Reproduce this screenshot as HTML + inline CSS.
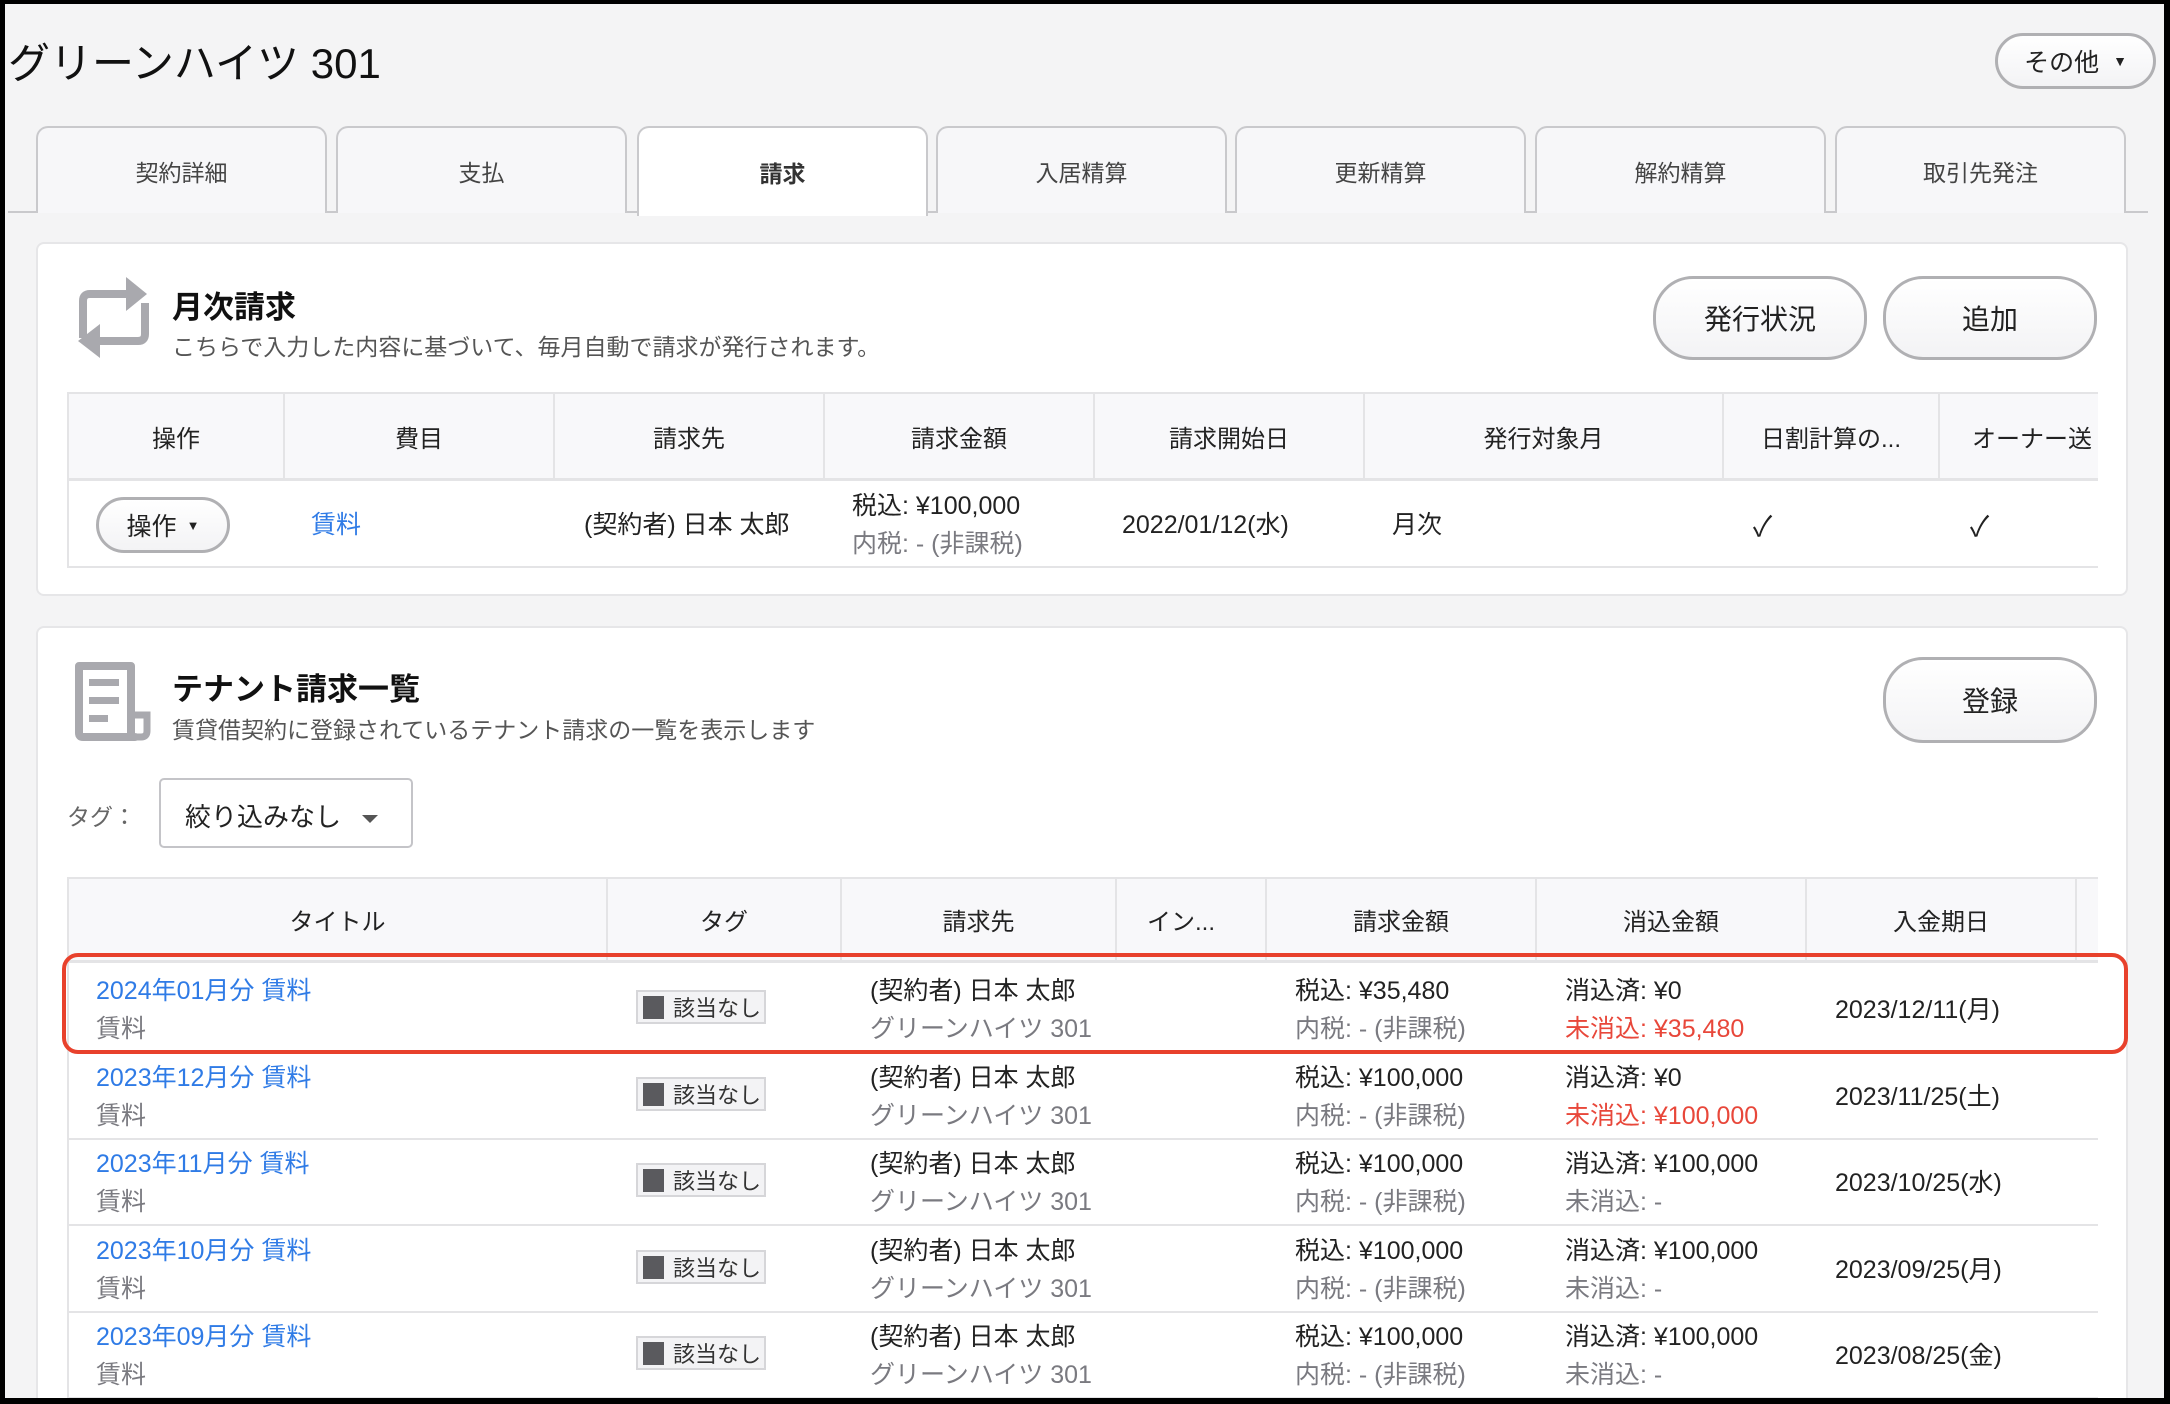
<!DOCTYPE html>
<html><head><meta charset="utf-8">
<style>
*{box-sizing:border-box;margin:0;padding:0}
body{width:2170px;height:1404px;overflow:hidden;background:#000;font-family:"Liberation Sans","Noto Sans CJK JP",sans-serif;color:#222;position:relative}
.page{position:absolute;left:5px;top:4px;width:2159px;height:1394px;background:#f4f4f5;overflow:hidden}
.a{position:absolute}
.pill{position:absolute;border:3px solid #b0b0b3;border-radius:40px;background:linear-gradient(#fff,#f3f3f5);display:flex;align-items:center;justify-content:center;font-size:28px;color:#222}
.tab{position:absolute;top:122px;height:87px;width:291px;border:2px solid #c9c9cc;border-bottom:none;border-radius:12px 12px 0 0;background:#f7f7f9;display:flex;align-items:center;justify-content:center;font-size:23px;color:#444}
.tab.on{background:#fff;font-weight:bold;color:#333;height:90px}
.card{position:absolute;left:31px;width:2092px;background:#fff;border:2px solid #e6e6e8;border-radius:8px}
.th{position:absolute;display:flex;align-items:center;justify-content:center;font-size:24px;color:#222;border-right:2px solid #e4e4e6;height:100%;top:0}
.t{position:absolute;font-size:25px;white-space:nowrap;line-height:1}
.blue{color:#2f7be6}.gray{color:#7a7a80}.red{color:#e8473a}
.badge{position:absolute;width:130px;height:34px;border:2px solid #d6d6d9;background:#f3f3f5;font-size:22px;color:#333;display:flex;align-items:center}
.badge i{display:block;width:21px;height:23px;background:#5a5a5e;margin:0 9px 0 5px}
</style></head><body>
<div class="page">
<div class="a" style="left:3px;top:26px;font-size:42px;color:#111">グリーンハイツ 301</div>
<div class="pill" style="left:1990px;top:29px;width:161px;height:56px;font-size:25px">その他 <span style="font-size:14px;margin-left:14px">▼</span></div>

<div class="a" style="left:3px;top:207px;width:2140px;height:2px;background:#c9c9cc"></div>
<div class="tab" style="left:31px">契約詳細</div>
<div class="tab" style="left:331px">支払</div>
<div class="tab on" style="left:632px">請求</div>
<div class="tab" style="left:931px">入居精算</div>
<div class="tab" style="left:1230px">更新精算</div>
<div class="tab" style="left:1530px">解約精算</div>
<div class="tab" style="left:1830px">取引先発注</div>

<!-- card 1 -->
<div class="card" style="top:238px;height:354px">
 <svg class="a" style="left:24px;top:17px" width="120" height="120" viewBox="0 0 120 120">
  <g fill="none" stroke="#a9a9ae" stroke-width="8" stroke-linejoin="round">
   <path d="M68 33 H28 Q21 33 21 40 V77"/>
   <path d="M36 80 H76 Q83 80 83 73 V42"/>
  </g>
  <polygon points="64,16 85,33 64,50" fill="#a9a9ae"/>
  <polygon points="38,63 16,80 38,97" fill="#a9a9ae"/>
 </svg>
 <div class="a" style="left:134px;top:38px;font-size:31px;font-weight:bold;color:#111">月次請求</div>
 <div class="a" style="left:134px;top:84px;font-size:23px;color:#555">こちらで入力した内容に基づいて、毎月自動で請求が発行されます。</div>
 <div class="pill" style="left:1615px;top:32px;width:214px;height:84px">発行状況</div>
 <div class="pill" style="left:1845px;top:32px;width:214px;height:84px">追加</div>
 <div class="a" style="left:29px;top:148px;width:2031px;height:89px;background:#f8f8fa;border-top:2px solid #e4e4e6;border-bottom:3px solid #e4e4e6;border-left:2px solid #e4e4e6">
  <div class="th" style="left:0;width:216px">操作</div>
  <div class="th" style="left:216px;width:270px">費目</div>
  <div class="th" style="left:486px;width:270px">請求先</div>
  <div class="th" style="left:756px;width:270px">請求金額</div>
  <div class="th" style="left:1026px;width:270px">請求開始日</div>
  <div class="th" style="left:1296px;width:359px">発行対象月</div>
  <div class="th" style="left:1655px;width:216px">日割計算の...</div>
  <div class="th" style="left:1871px;width:200px;border:none;justify-content:flex-start;padding-left:32px">オーナー送</div>
 </div>
 <div class="a" style="left:29px;top:237px;width:2031px;height:87px;border-left:2px solid #e4e4e6;border-bottom:2px solid #e4e4e6"></div>
 <div class="pill" style="left:58px;top:253px;width:134px;height:56px;font-size:25px">操作 <span style="font-size:13px;margin-left:10px">▼</span></div>
 <div class="t blue" style="left:273px;top:269px">賃料</div>
 <div class="t" style="left:546px;top:269px">(契約者) 日本 太郎</div>
 <div class="t" style="left:814px;top:250px">税込: ¥100,000</div>
 <div class="t gray" style="left:814px;top:288px">内税: - (非課税)</div>
 <div class="t" style="left:1084px;top:269px">2022/01/12(水)</div>
 <div class="t" style="left:1354px;top:269px">月次</div>
 <div class="t" style="left:1715px;top:269px;font-size:28px">✓</div>
 <div class="t" style="left:1932px;top:269px;font-size:28px">✓</div>
</div>

<!-- card 2 -->
<div class="card" style="top:622px;height:800px">
 <svg class="a" style="left:24px;top:19px" width="120" height="110" viewBox="0 0 120 110">
  <path d="M17 19 H69 V86 Q69 90 73 90 H21 Q17 90 17 86 Z" fill="none" stroke="#a9a9ae" stroke-width="8" stroke-linejoin="round"/>
  <path d="M69 68 H85 V84 Q85 90 79 90 H73 Q69 90 69 86" fill="none" stroke="#a9a9ae" stroke-width="7"/>
  <rect x="27" y="32" width="30" height="7" fill="#a9a9ae"/>
  <rect x="27" y="50" width="30" height="7" fill="#a9a9ae"/>
  <rect x="27" y="68" width="19" height="7" fill="#a9a9ae"/>
 </svg>
 <div class="a" style="left:134px;top:36px;font-size:31px;font-weight:bold;color:#111">テナント請求一覧</div>
 <div class="a" style="left:134px;top:83px;font-size:23px;color:#555">賃貸借契約に登録されているテナント請求の一覧を表示します</div>
 <div class="pill" style="left:1845px;top:29px;width:214px;height:86px">登録</div>
 <div class="a" style="left:29px;top:170px;font-size:23px;color:#666">タグ：</div>
 <div class="a" style="left:121px;top:150px;width:254px;height:70px;border:2px solid #c4c4c8;border-radius:5px;background:#fff;font-size:26px;color:#222;padding:17px 0 0 24px">絞り込みなし <span style="display:inline-block;width:0;height:0;border-left:8px solid transparent;border-right:8px solid transparent;border-top:8px solid #555;margin-left:14px;vertical-align:middle"></span></div>

 <div class="a" style="left:29px;top:249px;width:2031px;height:86px;background:#f8f8fa;border-top:2px solid #e4e4e6;border-left:2px solid #e4e4e6;border-bottom:3px solid #e4e4e6">
  <div class="th" style="left:0;width:539px">タイトル</div>
  <div class="th" style="left:539px;width:234px">タグ</div>
  <div class="th" style="left:773px;width:275px">請求先</div>
  <div class="th" style="left:1048px;width:150px;justify-content:flex-start;padding-left:30px">イン...</div>
  <div class="th" style="left:1198px;width:270px">請求金額</div>
  <div class="th" style="left:1468px;width:270px">消込金額</div>
  <div class="th" style="left:1738px;width:270px">入金期日</div>
 </div>
 <div class="a" style="left:29px;top:335px;width:2031px;height:450px;border-left:2px solid #e4e4e6"></div>
 <div class="a" style="left:29px;top:510px;width:2031px;height:2px;background:#e4e4e6"></div>
 <div class="a" style="left:29px;top:596px;width:2031px;height:2px;background:#e4e4e6"></div>
 <div class="a" style="left:29px;top:683px;width:2031px;height:2px;background:#e4e4e6"></div>
 <div class="a" style="left:29px;top:769px;width:2031px;height:2px;background:#e4e4e6"></div>

 <!-- rows -->
 <div class="t blue" style="left:58px;top:351px">2024年01月分 賃料</div>
 <div class="t gray" style="left:58px;top:389px">賃料</div>
 <div class="badge" style="left:598px;top:362px"><i></i>該当なし</div>
 <div class="t" style="left:832px;top:351px">(契約者) 日本 太郎</div>
 <div class="t gray" style="left:832px;top:389px">グリーンハイツ 301</div>
 <div class="t" style="left:1257px;top:351px">税込: ¥35,480</div>
 <div class="t gray" style="left:1257px;top:389px">内税: - (非課税)</div>
 <div class="t" style="left:1527px;top:351px">消込済: ¥0</div>
 <div class="t red" style="left:1527px;top:389px">未消込: ¥35,480</div>
 <div class="t" style="left:1797px;top:370px">2023/12/11(月)</div>

 <div class="t blue" style="left:58px;top:438px">2023年12月分 賃料</div>
 <div class="t gray" style="left:58px;top:476px">賃料</div>
 <div class="badge" style="left:598px;top:449px"><i></i>該当なし</div>
 <div class="t" style="left:832px;top:438px">(契約者) 日本 太郎</div>
 <div class="t gray" style="left:832px;top:476px">グリーンハイツ 301</div>
 <div class="t" style="left:1257px;top:438px">税込: ¥100,000</div>
 <div class="t gray" style="left:1257px;top:476px">内税: - (非課税)</div>
 <div class="t" style="left:1527px;top:438px">消込済: ¥0</div>
 <div class="t red" style="left:1527px;top:476px">未消込: ¥100,000</div>
 <div class="t" style="left:1797px;top:457px">2023/11/25(土)</div>

 <div class="t blue" style="left:58px;top:524px">2023年11月分 賃料</div>
 <div class="t gray" style="left:58px;top:562px">賃料</div>
 <div class="badge" style="left:598px;top:535px"><i></i>該当なし</div>
 <div class="t" style="left:832px;top:524px">(契約者) 日本 太郎</div>
 <div class="t gray" style="left:832px;top:562px">グリーンハイツ 301</div>
 <div class="t" style="left:1257px;top:524px">税込: ¥100,000</div>
 <div class="t gray" style="left:1257px;top:562px">内税: - (非課税)</div>
 <div class="t" style="left:1527px;top:524px">消込済: ¥100,000</div>
 <div class="t gray" style="left:1527px;top:562px">未消込: -</div>
 <div class="t" style="left:1797px;top:543px">2023/10/25(水)</div>

 <div class="t blue" style="left:58px;top:611px">2023年10月分 賃料</div>
 <div class="t gray" style="left:58px;top:649px">賃料</div>
 <div class="badge" style="left:598px;top:622px"><i></i>該当なし</div>
 <div class="t" style="left:832px;top:611px">(契約者) 日本 太郎</div>
 <div class="t gray" style="left:832px;top:649px">グリーンハイツ 301</div>
 <div class="t" style="left:1257px;top:611px">税込: ¥100,000</div>
 <div class="t gray" style="left:1257px;top:649px">内税: - (非課税)</div>
 <div class="t" style="left:1527px;top:611px">消込済: ¥100,000</div>
 <div class="t gray" style="left:1527px;top:649px">未消込: -</div>
 <div class="t" style="left:1797px;top:630px">2023/09/25(月)</div>

 <div class="t blue" style="left:58px;top:697px">2023年09月分 賃料</div>
 <div class="t gray" style="left:58px;top:735px">賃料</div>
 <div class="badge" style="left:598px;top:708px"><i></i>該当なし</div>
 <div class="t" style="left:832px;top:697px">(契約者) 日本 太郎</div>
 <div class="t gray" style="left:832px;top:735px">グリーンハイツ 301</div>
 <div class="t" style="left:1257px;top:697px">税込: ¥100,000</div>
 <div class="t gray" style="left:1257px;top:735px">内税: - (非課税)</div>
 <div class="t" style="left:1527px;top:697px">消込済: ¥100,000</div>
 <div class="t gray" style="left:1527px;top:735px">未消込: -</div>
 <div class="t" style="left:1797px;top:716px">2023/08/25(金)</div>
</div>

<div class="a" style="left:57px;top:949px;width:2066px;height:101px;border:4px solid #e8412c;border-radius:16px"></div>
</div>
</body></html>
